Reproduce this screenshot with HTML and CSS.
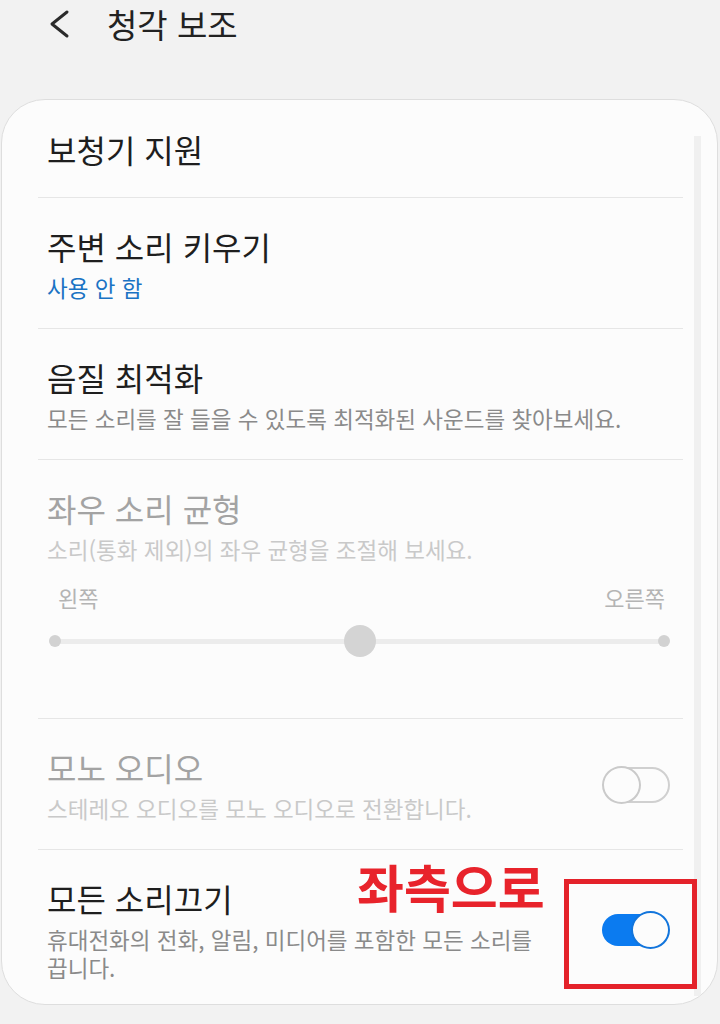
FILE: index.html
```html
<!DOCTYPE html>
<html lang="ko">
<head>
    <meta charset="UTF-8">
    <meta name="viewport" content="width=device-width, initial-scale=1.0">
    <title>청각 보조</title>
    <link rel="stylesheet" href="styles.css">
</head>
<body>
    <header class="topbar">
        <svg class="back" width="24" height="30" viewBox="0 0 24 30">
            <polyline points="19,3 4,15 19,27" fill="none" stroke="#2b2b2b" stroke-width="3" stroke-linecap="round" stroke-linejoin="round"/>
        </svg>
        <h1 class="page-title">청각 보조</h1>
    </header>

    <div class="card">
        <div class="scrollbar"></div>

        <div class="row first">
            <div class="text">
                <div class="title">보청기 지원</div>
            </div>
        </div>

        <div class="row">
            <div class="text">
                <div class="title">주변 소리 키우기</div>
                <div class="sub blue">사용 안 함</div>
            </div>
        </div>

        <div class="row">
            <div class="text">
                <div class="title">음질 최적화</div>
                <div class="sub">모든 소리를 잘 들을 수 있도록 최적화된 사운드를 찾아보세요.</div>
            </div>
        </div>

        <div class="row balance disabled">
            <div class="text">
                <div class="title">좌우 소리 균형</div>
                <div class="sub">소리(통화 제외)의 좌우 균형을 조절해 보세요.</div>
            </div>
            <div class="ends">
                <span>왼쪽</span>
                <span>오른쪽</span>
            </div>
            <div class="slider">
                <span class="dot"></span>
                <span class="dot"></span>
                <span class="thumb"></span>
            </div>
        </div>

        <div class="row disabled">
            <div class="text">
                <div class="title">모노 오디오</div>
                <div class="sub">스테레오 오디오를 모노 오디오로 전환합니다.</div>
            </div>
            <div class="switch off"><span class="knob"></span></div>
        </div>

        <div class="row last">
            <div class="text narrow">
                <div class="title">모든 소리끄기</div>
                <div class="sub">휴대전화의 전화, 알림, 미디어를 포함한 모든 소리를 끕니다.</div>
            </div>
            <div class="switch on"><span class="knob"></span></div>
        </div>

        <div class="note">좌측으로</div>
        <div class="note-box"></div>
    </div>
</body>
</html>
```

FILE: styles.css
```css
body {
    margin: 0;
    background-color: #f2f2f2;
    font-family: "Noto Sans CJK KR", "Noto Sans", sans-serif;
    color: #1e1e1e;
}
.topbar {
    display: flex;
    align-items: center;
    height: 48px;
    padding-left: 48px;
    margin-bottom: 51px;
}
.back {
    display: block;
}
.page-title {
    margin: 0 0 0 35px;
    font-size: 33px;
    font-weight: 400;
    line-height: 40px;
    color: #222;
}
.card {
    position: relative;
    margin: 0 2px 0 1px;
    height: 906px;
    box-sizing: border-box;
    background-color: #fcfcfc;
    border: 1px solid #dedede;
    border-radius: 44px;
    overflow: hidden;
}
.scrollbar {
    position: absolute;
    top: 36px;
    bottom: 8px;
    right: 16px;
    width: 7px;
    background-color: #f0f0f0;
}
.row {
    display: flex;
    align-items: center;
    margin: 0 34px 0 36px;
    padding: 28px 13px 27px 9px;
    border-bottom: 1px solid #e6e6e6;
}
.row.first {
    padding-top: 29px;
    padding-bottom: 28px;
}
.row.last {
    border-bottom: none;
}
.text {
    flex: 1;
}
.text.narrow {
    flex: none;
    max-width: 500px;
}
.title {
    font-size: 32px;
    line-height: 40px;
}
.sub {
    margin-top: 7px;
    font-size: 22.5px;
    line-height: 28px;
    color: #8a8a8a;
}
.sub.blue {
    color: #1a73c4;
}
.disabled .title {
    color: #a3a3a3;
}
.disabled .sub {
    color: #c9c9c9;
}
.balance {
    flex-direction: column;
    align-items: stretch;
    padding-bottom: 60px;
}
.ends {
    display: flex;
    justify-content: space-between;
    margin-top: 20px;
    padding: 0 5px 0 11px;
    font-size: 22px;
    line-height: 28px;
    color: #b4b4b4;
}
.slider {
    position: relative;
    display: flex;
    justify-content: space-between;
    align-items: center;
    height: 34px;
    margin: 13px 0 0 2px;
}
.slider::before {
    content: "";
    position: absolute;
    left: 6px;
    right: 6px;
    top: 15px;
    height: 5px;
    background-color: #ececec;
}
.dot {
    position: relative;
    width: 12px;
    height: 12px;
    border-radius: 50%;
    background-color: #d2d2d2;
}
.thumb {
    position: absolute;
    left: 50%;
    top: 1px;
    width: 32px;
    height: 32px;
    margin-left: -16px;
    border-radius: 50%;
    background-color: #d4d4d4;
}
.switch {
    position: relative;
    flex: none;
    width: 68px;
    height: 38px;
    margin-left: auto;
}
.switch.off::before {
    content: "";
    position: absolute;
    left: 2px;
    right: 0;
    top: 1px;
    bottom: 1px;
    box-sizing: border-box;
    border: 2px solid #d0d0d0;
    border-radius: 18px;
}
.switch.off .knob {
    position: absolute;
    left: 0;
    top: 0;
    width: 39px;
    height: 38px;
    box-sizing: border-box;
    border: 2px solid #cacaca;
    border-radius: 50%;
    background-color: #fcfcfc;
}
.switch.on::before {
    content: "";
    position: absolute;
    left: 0;
    right: 14px;
    top: 3px;
    bottom: 3px;
    border-radius: 16px;
    background-color: #0b7bf0;
}
.switch.on .knob {
    position: absolute;
    right: 0;
    top: 0;
    width: 39px;
    height: 38px;
    box-sizing: border-box;
    border: 2px solid #1275dc;
    border-radius: 50%;
    background-color: #fcfcfc;
}
.note {
    position: absolute;
    left: 355px;
    top: 761px;
    font-size: 51px;
    font-weight: 700;
    line-height: 50px;
    color: #e8232b;
}
.note-box {
    position: absolute;
    left: 562px;
    top: 779px;
    width: 133px;
    height: 110px;
    box-sizing: border-box;
    border: 5px solid #e4222a;
}
```
